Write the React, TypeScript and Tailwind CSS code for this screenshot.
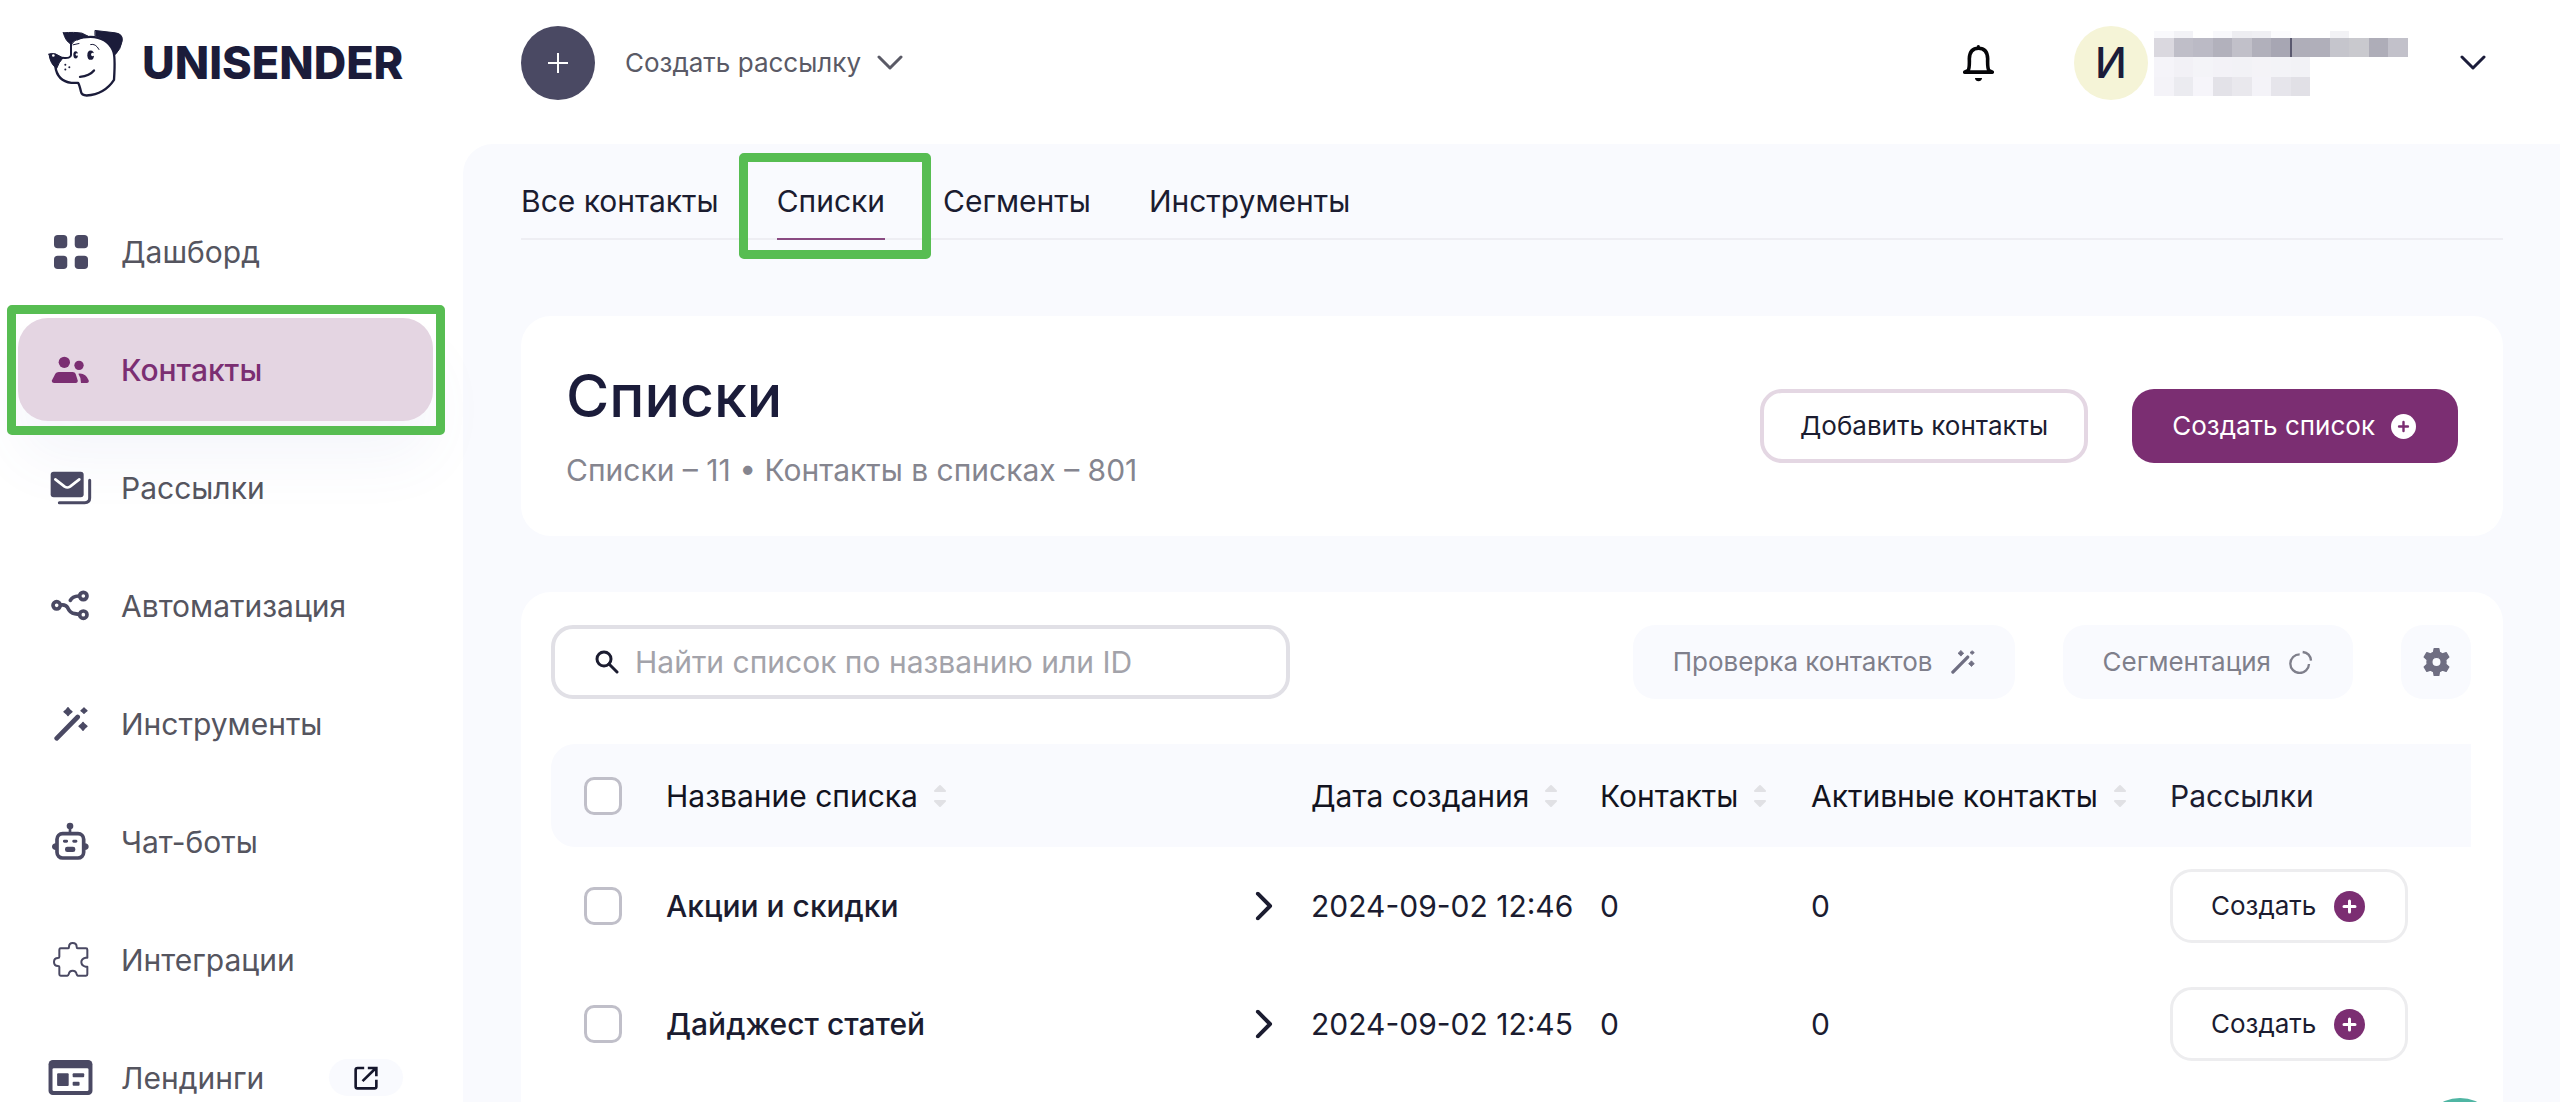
import { useState } from 'react'
import type { ReactNode } from 'react'

function DogLogo() {
  return (
    <svg viewBox="144 84 228 206" className="h-[69px] w-[76px] shrink-0" fill="none" stroke="#1b1c3a" strokeLinecap="round" strokeLinejoin="round">
      <path d="M190 95Q224 92 246 96L264 105L240 112Q222 116 214 130Q196 120 190 95Z" fill="#1b1c3a" strokeWidth="3" />
      <path d="M286 88L346 95Q369 98 367 118Q362 145 346 160Q338 132 316 117Q302 108 286 104Z" fill="#1b1c3a" strokeWidth="3" />
      <path d="M147 159Q152 155 166 158L189 170Q176 184 170 202Q150 188 147 159Z" fill="#1b1c3a" strokeWidth="3" />
      <path d="M213 126V162Q212 173 188 170" strokeWidth="6" />
      <path d="M166 196Q172 240 214 245H234Q238 250 243 272Q245 283 260 283Q314 279 342 236Q347 160 338 146Q320 108 272 107Q246 107 232 114" strokeWidth="7" />
      <path d="M240 227Q269 224 282 208" strokeWidth="7" />
      <path d="M272 130Q287 126 297 145M219 131L237 127" strokeWidth="3" />
      <ellipse cx="227" cy="161" rx="7" ry="11" fill="#1b1c3a" stroke="none" />
      <ellipse cx="272" cy="162" rx="10" ry="14" fill="#1b1c3a" stroke="none" />
      <circle cx="231" cy="160" r="4" fill="#fff" stroke="none" />
      <circle cx="278" cy="160" r="5" fill="#fff" stroke="none" />
      <circle cx="160" cy="163" r="4" fill="#fff" stroke="none" />
      <g fill="#1b1c3a" stroke="none">
        <circle cx="196" cy="191" r="3" />
        <circle cx="208" cy="198" r="3" />
        <circle cx="196" cy="205" r="3" />
      </g>
    </svg>
  )
}

function DashboardIcon() {
  return (
    <svg viewBox="0 0 100 100" className="size-[34px]" fill="currentColor">
      <rect width="39" height="39" rx="11" />
      <rect x="61" width="39" height="39" rx="11" />
      <rect y="61" width="39" height="39" rx="11" />
      <rect x="61" y="61" width="39" height="39" rx="11" />
    </svg>
  )
}

function ContactsIcon() {
  return (
    <svg viewBox="153 198 117 84" className="h-[28px] w-[39px]" fill="currentColor">
      <circle cx="193" cy="217" r="17" />
      <circle cx="237" cy="226" r="14" />
      <path d="M156 271L166 251Q169 246 176 246H218Q225 246 227 252L233 271Q234 279 227 279H163Q154 279 156 271Z" />
      <path d="M235 251Q257 248 266 271Q268 279 260 279H243Q243 262 235 251Z" />
    </svg>
  )
}

function MailIcon() {
  return (
    <svg viewBox="148 543 126 102" className="h-[34px] w-[42px]" fill="none" strokeLinecap="round" strokeLinejoin="round">
      <rect x="150" y="545" width="99" height="77" rx="9" fill="currentColor" />
      <path d="M164 568L192 590Q200 595 208 590L236 568" stroke="#fff" strokeWidth="8" />
      <path d="M176 638H252Q267 638 267 624V571" stroke="currentColor" strokeWidth="9" />
    </svg>
  )
}

function AutomationIcon() {
  return (
    <svg viewBox="153 903 117 93" className="h-[31px] w-[39px]" fill="none" stroke="currentColor" strokeWidth="11" strokeLinecap="round">
      <circle cx="170" cy="949" r="11" />
      <circle cx="250" cy="921" r="11" />
      <circle cx="250" cy="977" r="11" />
      <path d="M183 948Q197 946 203 956Q210 972 224 974L237 976" />
      <path d="M211 934Q217 922 236 921" />
    </svg>
  )
}

function WandIcon({ className }: { className: string }) {
  return (
    <svg viewBox="160 84 102 102" className={className} fill="currentColor">
      <path d="M168 178L231 114" fill="none" stroke="currentColor" strokeWidth="14" strokeLinecap="round" />
      <path d="M202 86l5 6 7 6-7 6-5 6-5-6-7-6 7-6z" stroke="currentColor" strokeWidth="4" strokeLinejoin="round" />
      <path d="M250 87l4 4 5 4-5 4-4 4-4-4-5-4 5-4z" stroke="currentColor" strokeWidth="4" strokeLinejoin="round" />
      <path d="M247 130l5 6 7 6-7 6-5 6-5-6-7-6 7-6z" stroke="currentColor" strokeWidth="4" strokeLinejoin="round" />
    </svg>
  )
}

function BotIcon() {
  return (
    <svg viewBox="153 432 117 117" className="size-[39px]" fill="currentColor">
      <rect x="171" y="467" width="80" height="73" rx="17" fill="none" stroke="currentColor" strokeWidth="11" />
      <circle cx="210" cy="444" r="10" />
      <path d="M206 446h8v20h-8z" />
      <path d="M168 496v20q-12-1-12-10t12-10zM254 496v20q12-1 12-10t-12-10z" />
      <rect x="189" y="485" width="15" height="9" rx="4" />
      <rect x="217" y="485" width="15" height="9" rx="4" />
      <rect x="195" y="506" width="31" height="16" rx="7" />
    </svg>
  )
}

function PuzzleIcon() {
  return (
    <svg viewBox="153 790 117 111" className="h-[37px] w-[39px]" fill="none" stroke="currentColor" strokeWidth="6" strokeLinejoin="round">
      <path d="M182 812H205Q207 812 207 808Q207 796 218 796Q230 796 230 808Q230 812 233 812H258Q262 812 262 816V840H257Q244 843 244 853Q244 864 257 867H262V890Q262 894 258 894H233Q231 894 230 890Q228 879 218 879Q208 879 206 890Q205 894 202 894H182Q178 894 178 890V868Q178 865 174 865Q162 865 162 853Q162 841 174 841Q178 841 178 837V816Q178 812 182 812Z" />
    </svg>
  )
}

function LandingIcon() {
  return (
    <svg viewBox="144 1147 133 106" className="h-[35px] w-[45px]" fill="currentColor">
      <rect x="144" y="1147" width="133" height="106" rx="13" />
      <rect x="156" y="1172" width="109" height="69" rx="4" fill="#fff" />
      <rect x="170" y="1187" width="35" height="39" rx="3" />
      <rect x="217" y="1187" width="35" height="12" rx="3" />
      <rect x="217" y="1213" width="21" height="12" rx="3" />
    </svg>
  )
}

function ExternalIcon() {
  return (
    <svg viewBox="1062 1162 73 73" className="size-6" fill="none" stroke="#15162c" strokeWidth="8">
      <path d="M1093 1168H1073Q1067 1168 1067 1174V1224Q1067 1230 1073 1230H1124Q1130 1230 1130 1224V1204" />
      <path d="M1088 1208L1128 1169M1104 1168H1130V1193" />
    </svg>
  )
}

function ChevronIcon({ className }: { className: string }) {
  return (
    <svg viewBox="0 0 26 16" className={className} fill="none" stroke="currentColor" strokeLinecap="round" strokeLinejoin="round">
      <path d="M2 2L13 13L24 2" />
    </svg>
  )
}

function BellIcon() {
  return (
    <svg viewBox="38 85 92 116" className="h-[38px] w-[31px]">
      <path d="M52 166Q57 160 56 130Q57 98 84 98Q111 98 112 130Q111 160 116 166L126 171H42Z" fill="none" stroke="#050508" strokeWidth="11" strokeLinejoin="round" />
      <path d="M79 90q5-4 9 0v12h-9zM73 189h22q-2 10-11 10t-11-10z" fill="#050508" />
    </svg>
  )
}

function SearchIcon() {
  return (
    <svg viewBox="0 0 24 24" className="size-6 shrink-0" fill="none" stroke="#1b1c30" strokeWidth="3" strokeLinecap="round">
      <circle cx="9" cy="9" r="7" />
      <path d="M14 14L22 22" />
    </svg>
  )
}

function SegmentIcon() {
  return (
    <svg viewBox="1042 104 72 72" className="size-6" fill="none" stroke="currentColor" strokeWidth="7">
      <path d="M1074 117A28 28 0 1 0 1102 146" />
      <path d="M1083 110Q1106 113 1108 136" />
    </svg>
  )
}

function GearIcon() {
  return (
    <svg viewBox="0 0 80 84" className="h-[28px] w-[27px]" fill="currentColor" stroke="currentColor" strokeWidth="4" strokeLinejoin="round">
      <path
        fillRule="evenodd"
        d="M33 2H47L49 13Q54 15 58 18L69 14L77 27L68 35Q69 42 68 49L77 57L69 70L58 66Q54 69 49 71L47 82H33L31 71Q26 69 22 66L11 70L3 57L12 49Q11 42 12 35L3 27L11 14L22 18Q26 15 31 13ZM40 28A14 14 0 1 0 40 56A14 14 0 1 0 40 28Z"
      />
    </svg>
  )
}

function PlusBadge({ className, plus }: { className: string; plus: string }) {
  return (
    <svg viewBox="0 0 31 31" className={className}>
      <circle cx="15.5" cy="15.5" r="15.5" fill="currentColor" />
      <path d="M15.5 10V21M10 15.5H21" stroke={plus} strokeWidth="3" strokeLinecap="round" />
    </svg>
  )
}

function SortIcon() {
  return (
    <svg viewBox="0 0 16 24" className="h-6 w-4 text-[#e1e1e5]" fill="currentColor" stroke="currentColor" strokeWidth="2" strokeLinejoin="round">
      <path d="M8 2L13 7H3ZM8 22L13 17H3Z" />
    </svg>
  )
}

const menu: { label: string; icon: ReactNode; active?: boolean; external?: boolean }[] = [
  { label: 'Дашборд', icon: <DashboardIcon /> },
  { label: 'Контакты', icon: <ContactsIcon />, active: true },
  { label: 'Рассылки', icon: <MailIcon /> },
  { label: 'Автоматизация', icon: <AutomationIcon /> },
  { label: 'Инструменты', icon: <WandIcon className="size-[34px]" /> },
  { label: 'Чат-боты', icon: <BotIcon /> },
  { label: 'Интеграции', icon: <PuzzleIcon /> },
  { label: 'Лендинги', icon: <LandingIcon />, external: true },
]

const tabs = ['Все контакты', 'Списки', 'Сегменты', 'Инструменты']

const lists = [
  { name: 'Акции и скидки', created: '2024-09-02 12:46', contacts: 0, active: 0 },
  { name: 'Дайджест статей', created: '2024-09-02 12:45', contacts: 0, active: 0 },
]

// Blurred account name and balance
const blurRows = [
  { height: 'h-[7px]', cells: ['#f9f9fc', '#f2f2f6', '#ffffff', '#f8f8fb', '#ededf1', '#efeff3', '#fbfbfd', '#ffffff', '#ffffff', '#f2f2f5', '#ffffff', '#ffffff', '#ffffff'] },
  { height: 'h-[19px]', cells: ['#dad8df', '#bfbec8', '#bbbac5', '#b2b1bc', '#c1c0c9', '#b1b0bb', '#a7a6b3', '#afaeb9', '#b0afba', '#c5c5cc', '#c9c9ce', '#aeadb8', '#c2c1ca'] },
  { height: 'h-[20px]', cells: ['#f5f4f9', '#f2f1f6', '#f4f4f8', '#f3f2f7', '#f2f2f6', '#f4f3f7', '#f3f3f7', '#f2f2f6', '#ffffff', '#ffffff', '#ffffff', '#ffffff', '#ffffff'] },
  { height: 'h-[19px]', cells: ['#f4f3f8', '#ebebf0', '#f6f5fa', '#e3e2e8', '#e9e8ed', '#f4f3f8', '#e6e5eb', '#e1e0e6', '#ffffff', '#ffffff', '#ffffff', '#ffffff', '#ffffff'] },
]

const checkboxClass =
  'block size-[38px] appearance-none rounded-[10px] border-[3px] border-[#c0bfc9] bg-white checked:bg-[#7b2e72]'

function Highlight({ className }: { className: string }) {
  return <span className={`pointer-events-none absolute rounded-[5px] border-[9px] border-[#57bd52] ${className}`} />
}

function Sidebar() {
  return (
    <aside className="w-[463px] shrink-0 text-[#4a4963]">
      <a href="#" className="flex h-[144px] items-center gap-[18px] pb-[18px] pl-12">
        <DogLogo />
        <span className="text-[45px] leading-[48px] font-extrabold text-[#1b1c3a]">UNISENDER</span>
      </a>
      <nav className="flex flex-col gap-[15px] pt-14 pr-[30px] pl-[18px]">
        {menu.map((item) => (
          <a
            key={item.label}
            href="#"
            className={`relative flex h-[103px] items-center gap-7 rounded-[30px] px-[30px] text-[30px] leading-9 ${
              item.active ? 'bg-[#e4d5e2] font-medium text-[#7b2e72] shadow-[0_40px_60px_rgba(90,100,180,0.06)]' : 'text-[#55555f]'
            }`}
          >
            <span className={`flex w-[45px] shrink-0 justify-center ${item.active ? '' : 'text-[#4a4963]'}`}>{item.icon}</span>
            {item.label}
            {item.external && (
              <span className="ml-auto flex h-[37px] w-[74px] items-center justify-center rounded-full bg-[#f9fafe]">
                <ExternalIcon />
              </span>
            )}
            {item.active && <Highlight className="-top-[13px] -right-3 -bottom-[14px] -left-[11px]" />}
          </a>
        ))}
      </nav>
    </aside>
  )
}

function Header() {
  return (
    <header className="flex h-[144px] items-center pr-[74px] pb-[18px] pl-[58px]">
      <button aria-label="Создать" className="flex size-[74px] items-center justify-center rounded-full bg-[#4a4963]">
        <svg viewBox="0 0 20 20" className="size-5" stroke="#fff" strokeWidth="2">
          <path d="M10 0V20M0 10H20" />
        </svg>
      </button>
      <button className="ml-[30px] flex items-center gap-4 text-[26px] leading-8 text-[#5a5a66]">
        Создать рассылку
        <ChevronIcon className="h-4 w-[26px] stroke-3" />
      </button>

      <button aria-label="Уведомления" className="ml-auto">
        <BellIcon />
      </button>
      <button aria-label="Аккаунт" className="ml-20 flex items-center">
        <span className="flex size-[74px] items-center justify-center rounded-full bg-[#f5f4d7] text-[42px] leading-[48px] font-medium text-[#1b1c3a]">
          И
        </span>
        <span className="relative ml-[6px] block w-[254px]">
          {blurRows.map((row) => (
            <span key={row.height + row.cells[0]} className={`grid grid-cols-13 ${row.height}`}>
              {row.cells.map((color, i) => (
                <span key={i} style={{ backgroundColor: color }} />
              ))}
            </span>
          ))}
          <span className="absolute top-[7px] left-[136px] h-[19px] w-0.5 bg-[#5a596f]" />
        </span>
        <ChevronIcon className="ml-[52px] h-4 w-[26px] stroke-3 text-[#1b1c3a]" />
      </button>
    </header>
  )
}

function SortHeader({ label, className = '' }: { label: string; className?: string }) {
  return (
    <th className={`font-normal ${className}`}>
      <button className="flex items-center gap-[14px]">
        {label}
        <SortIcon />
      </button>
    </th>
  )
}

function ListsTable() {
  return (
    <table className="mt-[45px] w-full table-fixed text-left text-[30px] leading-9 text-[#1b1c30]">
      <thead>
        <tr className="h-[103px] bg-[#f9fafe] text-[#121320]">
          <th className="w-[115px] rounded-l-[24px] pl-[33px]">
            <input type="checkbox" aria-label="Выбрать все списки" className={checkboxClass} />
          </th>
          <SortHeader label="Название списка" />
          <SortHeader label="Дата создания" className="w-[289px]" />
          <SortHeader label="Контакты" className="w-[211px]" />
          <SortHeader label="Активные контакты" className="w-[359px]" />
          <th className="w-[301px] font-normal text-[#1b1c30]">Рассылки</th>
        </tr>
      </thead>
      <tbody>
        {lists.map((list) => (
          <tr key={list.name} className="h-[118px]">
            <td className="pl-[33px]">
              <input type="checkbox" aria-label={list.name} className={checkboxClass} />
            </td>
            <td className="pr-8">
              <a href="#" className="flex items-center justify-between font-medium">
                {list.name}
                <ChevronIcon className="h-[18px] w-[29px] -rotate-90 stroke-[3.5]" />
              </a>
            </td>
            <td>{list.created}</td>
            <td>{list.contacts}</td>
            <td>{list.active}</td>
            <td>
              <button className="flex h-[74px] items-center gap-[18px] rounded-[22px] border-[3px] border-[#ededef] pr-10 pl-[38px] text-[26px] leading-8">
                Создать
                <PlusBadge className="size-[31px] text-[#7b2e72]" plus="#fff" />
              </button>
            </td>
          </tr>
        ))}
      </tbody>
    </table>
  )
}

export default function App() {
  const [tab, setTab] = useState('Списки')
  const [query, setQuery] = useState('')

  return (
    <div className="flex h-screen overflow-hidden bg-white font-[Inter,sans-serif]">
      <Sidebar />
      <div className="flex min-w-0 flex-1 flex-col">
        <Header />
        <main className="flex-1 rounded-tl-[30px] bg-[#f9fafe] pt-[39px] pr-[57px] pl-[58px]">
          {/* Tabs */}
          <nav className="flex gap-[58px] border-b-2 border-[#eeeef3]">
            {tabs.map((name) => (
              <button
                key={name}
                onClick={() => setTab(name)}
                className={`relative -mb-[2px] border-b-2 pb-[19px] text-[30px] leading-9 text-[#1b1c30] ${
                  name === tab ? 'border-[#8a4a82]' : 'border-transparent'
                }`}
              >
                {name}
                {name === tab && <Highlight className="-top-[30px] -right-[46px] -bottom-[21px] -left-[38px]" />}
              </button>
            ))}
          </nav>

          {/* Page heading */}
          <section className="mt-[76px] flex items-center justify-between rounded-[30px] bg-white px-[45px] py-12">
            <div>
              <h1 className="text-[59px] leading-[64px] font-medium text-[#1b1c3a]">Списки</h1>
              <p className="mt-6 text-[30px] leading-9 text-[#85858f]">Списки – 11 • Контакты в списках – 801</p>
            </div>
            <div className="flex gap-11 text-[26px] leading-8">
              <button className="h-[74px] rounded-[22px] border-4 border-[#e4d7e3] px-9 text-[#1b1c30]">Добавить контакты</button>
              <button className="flex h-[74px] items-center gap-4 rounded-[22px] bg-[#7b2e72] pr-[42px] pl-10 text-white">
                Создать список
                <PlusBadge className="size-[25px]" plus="#7b2e72" />
              </button>
            </div>
          </section>

          {/* Lists */}
          <section className="mt-14 h-full rounded-[30px] bg-white pt-[33px] pr-8 pl-[30px]">
            <div className="flex items-center gap-12 text-[26px] leading-8 text-[#7f7f8b]">
              <label className="mr-auto flex h-[74px] w-[739px] items-center gap-4 rounded-[22px] border-4 border-[#e1e0e6] px-10">
                <SearchIcon />
                <input
                  type="text"
                  aria-label="Поиск по спискам"
                  placeholder="Найти список по названию или ID"
                  value={query}
                  onChange={(e) => setQuery(e.target.value)}
                  className="w-full min-w-0 text-[30px] leading-9 text-[#1b1c30] outline-none placeholder:text-[#a3a3aa]"
                />
              </label>
              <button className="flex h-[74px] items-center gap-[18px] rounded-[22px] bg-[#f9fafe] px-10">
                Проверка контактов
                <WandIcon className="size-6 text-[#6f6e82]" />
              </button>
              <button className="flex h-[74px] items-center gap-[18px] rounded-[22px] bg-[#f9fafe] px-10">
                Сегментация
                <SegmentIcon />
              </button>
              <button aria-label="Настройки" className="flex h-[74px] w-[70px] items-center justify-center rounded-[22px] bg-[#f9fafe] text-[#6f6e82]">
                <GearIcon />
              </button>
            </div>
            <ListsTable />
          </section>
        </main>
      </div>

      {/* Support chat */}
      <button aria-label="Чат поддержки" className="fixed right-[60px] -bottom-[76px] size-20 rounded-full bg-[#4fb5a3]" />
    </div>
  )
}
